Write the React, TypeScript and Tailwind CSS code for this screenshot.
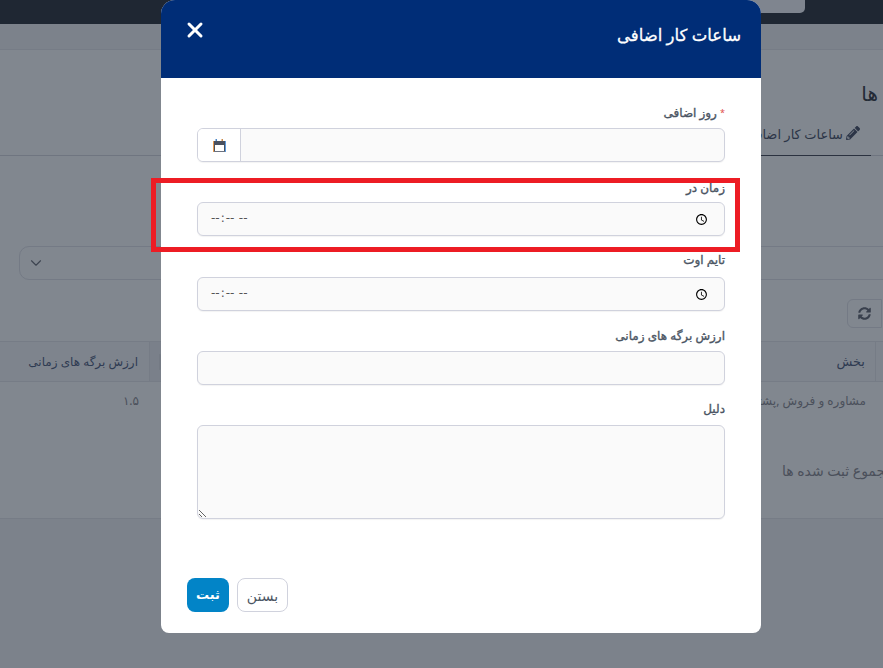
import { ChevronDown, X } from 'lucide-react';
import { FaPencilAlt, FaSyncAlt } from 'react-icons/fa';

const fieldLabel = "block text-[12px] leading-[18px] text-[#4b5563] [-webkit-text-stroke:0.35px_#4b5563]";
const fieldBox = 'h-[34px] w-full rounded-[6px] border border-[#d0d2dd] bg-[#fafafa] shadow-[0_1px_1px_rgba(0,0,0,0.05)] outline-none';

const TimeField = () => (
  <input
    type="time"
    dir="ltr"
    className={`${fieldBox} px-[12px] pb-[3px] font-['DejaVu_Sans',sans-serif] text-[12px] text-[#555] [&::-webkit-calendar-picker-indicator]:translate-x-[-1px] [&::-webkit-calendar-picker-indicator]:translate-y-[2px]`}
  />
);

const CalendarIcon = () => (
  <svg width="15" height="15" viewBox="0 0 15 15" fill="none">
    <rect x="1" y="3" width="1" height="11" fill="#e59a4f" />
    <rect x="13" y="3" width="1" height="11" fill="#5b9be0" />
    <rect x="2" y="3" width="11" height="4" fill="#4a5160" />
    <rect x="2" y="7" width="1" height="6" fill="#4a5160" />
    <rect x="12" y="7" width="1" height="6" fill="#4a5160" />
    <rect x="2" y="13" width="11" height="1" fill="#6b7280" />
    <rect x="3.5" y="1" width="1.5" height="2" fill="#4a86c8" />
    <rect x="9.5" y="1" width="1.5" height="2" fill="#c98a4a" />
  </svg>
);

const Background = () => (
  <div className="flex h-[668px] w-[883px] flex-col overflow-hidden bg-[#7c828b] font-['Noto_Sans','DejaVu_Sans',sans-serif]">
    <div className="flex h-[24px] shrink-0 justify-end bg-[#1f2733] pr-[78px]">
      <div className="h-[13px] w-[100px] rounded-b-[5px] bg-[#7f858f]" />
    </div>
    <div className="h-[26px] shrink-0 border-b border-[#767c86] bg-[#7c828b]" />
    <div className="flex h-[468px] shrink-0 flex-col bg-[#81878f]" dir="rtl">
      <div className="h-[32px] shrink-0" />
      <div className="pr-[5px] text-[20px] leading-[24px] text-[#232a36]">ها</div>
      <div className="mt-[19px] flex h-[31px] shrink-0 border-b border-[#6f7580]">
        <div className="mr-[12px] flex h-[31px] w-[300px] items-start gap-[3px] border-b border-[#2b3240] pr-[11px] text-[13px] leading-[18px] text-[#2c3547]">
          <FaPencilAlt size={14} className="mt-[1px] shrink-0" />
          <span className="whitespace-nowrap">ساعات کار اضافی</span>
        </div>
      </div>
      <div className="-mr-[20px] ml-[19px] mt-[90px] flex h-[34px] shrink-0 items-center justify-end rounded-[10px] border border-[#747a85] pl-[7px]">
        <ChevronDown size={18} strokeWidth={1.5} className="text-[#3d4450]" />
      </div>
      <div className="mt-[19px] h-[29px] shrink-0 pr-[1px]">
        <div className="flex h-[29px] w-[35px] items-center justify-center rounded-l-[6px] border border-[#747a85] pr-[1px]">
          <FaSyncAlt size={13} className="text-[#39404d]" />
        </div>
      </div>
      <div className="mt-[13px] flex h-[41px] shrink-0 items-stretch border-y border-[#767c86] bg-[#7e848d] text-[13px] text-[#2f3b52]">
        <div className="w-[8px] border-l border-[#767c86]" />
        <div className="flex flex-1 items-center pr-[10px]">
          <span>بخش</span>
        </div>
        <div className="flex w-[12px] items-center bg-[#7a808a]">
          <div className="h-[16px] w-[3px] rounded-r-[3px] bg-[#747a84]" />
        </div>
        <div className="flex w-[150px] items-center border-r border-[#767c86] pr-[11px] text-[12px]">
          <span>ارزش برگه های زمانی</span>
        </div>
      </div>
      <div className="flex h-[37px] shrink-0 items-center justify-between pr-[17px] text-[12px] text-[#4b505b]">
        <span>مشاوره و فروش ,پشتیبانی</span>
        <span className="w-[150px] pr-[11px]">۱.۵</span>
      </div>
      <div className="mt-[42px] whitespace-nowrap text-[14px] leading-[20px] text-[#4b505b]">
        <span className="mr-[-10px]">مجموع ثبت شده ها</span>
      </div>
    </div>
    <div className="flex-1 border-t border-[#767c86] bg-[#7c828b]" />
  </div>
);

const Modal = () => (
  <div dir="rtl" className="absolute left-[161px] top-0 flex h-[633px] w-[600px] flex-col overflow-hidden rounded-b-[8px] rounded-t-[14px] bg-white font-['Noto_Sans','DejaVu_Sans',sans-serif]">
    <div className="flex h-[78px] shrink-0 items-start justify-between bg-[#002d77] pl-[22px] pr-[20px]">
      <h2 className="mt-[23px] text-[16.5px] leading-[24px] text-white [-webkit-text-stroke:0.3px_white]">ساعات کار اضافی</h2>
      <X size={24} strokeWidth={3} className="mt-[18px] text-white" />
    </div>
    <div className="flex flex-1 flex-col px-[36px] pt-[26px]">
      <label className={fieldLabel}><span className="align-top text-[9px] text-[#e04b4b] [-webkit-text-stroke:0]">*</span> روز اضافی</label>
      <div className={`${fieldBox} mt-[6px] flex overflow-hidden`}>
        <div className="flex-1" />
        <div className="flex w-[43px] items-center justify-center border-r border-[#d0d2dd] bg-white">
          <CalendarIcon />
        </div>
      </div>
      <label className={`${fieldLabel} mt-[17px]`}>زمان در</label>
      <div className="mt-[5px]"><TimeField /></div>
      <label className={`${fieldLabel} mt-[15px]`}>تایم اوت</label>
      <div className="mt-[8px]"><TimeField /></div>
      <label className={`${fieldLabel} mt-[16px]`}>ارزش برگه های زمانی</label>
      <div className={`${fieldBox} mt-[6px]`} />
      <label className={`${fieldLabel} mt-[15px]`}>دلیل</label>
      <textarea dir="rtl" className={`${fieldBox} mt-[7px] block !h-[94px] resize-y`} />
      <div dir="ltr" className="mt-[59px] -ml-[10px] flex gap-[8px]">
        <button className="h-[34px] w-[42px] rounded-[8px] bg-[#0284c7] text-[13px] font-bold text-white">ثبت</button>
        <button className="h-[34px] w-[51px] rounded-[8px] border border-[#d0d2dd] bg-white text-[14px] text-[#4b5563]">بستن</button>
      </div>
    </div>
  </div>
);

export default function App() {
  return (
    <div className="relative h-[668px] w-[883px] overflow-hidden">
      <Background />
      <Modal />
      <div className="absolute left-[151px] top-[178px] h-[74px] w-[589px] border-[5px] border-[#ed1c24]" />
    </div>
  );
}
